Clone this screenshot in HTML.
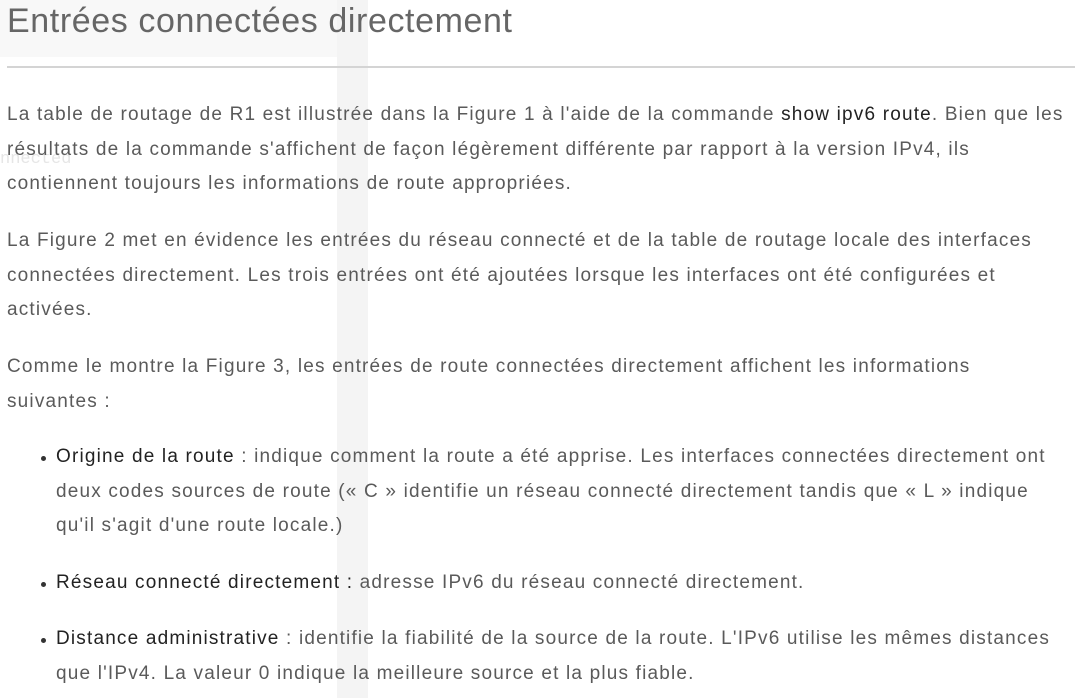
<!DOCTYPE html>
<html><head><meta charset="utf-8"><style>
html,body{margin:0;padding:0;background:#fff;width:1081px;height:698px;overflow:hidden;position:relative}
body{font-family:"Liberation Sans",sans-serif;color:#5a5a5a}
.g1{position:absolute;left:0;top:0;width:367px;height:57px;background:#f8f8f8}
.g2{position:absolute;left:337px;top:0;width:31px;height:698px;background:#f4f4f4}
.ghost{position:absolute;left:0;top:150px;font-family:"Liberation Mono",monospace;font-size:17px;color:#e6e6e6}
.c{position:absolute;left:7px;top:0;width:1074px}
h1{margin:0;position:absolute;top:2px;left:0;font-weight:300;font-size:34px;color:#666;white-space:nowrap;letter-spacing:0.6px}
hr{position:absolute;top:66px;left:0;width:1068px;margin:0;border:0;border-top:2px solid #d4d4d4}
p,li{font-size:19px;letter-spacing:1.18px;line-height:34.7px;white-space:nowrap;margin:0}
.t{position:absolute;left:0}
b{font-weight:normal;color:#222}
ul{margin:0;padding:0;list-style:none}
li{position:absolute;left:49px}
li:before{content:"";position:absolute;left:-15px;top:16px;width:5px;height:5px;border-radius:50%;background:#333}
</style></head><body>
<div class="g1"></div><div class="g2"></div>
<div class="ghost">nnected</div>
<div class="c">
<h1>Entrées connectées directement</h1>
<hr>
<p class="t" style="top:98px">La table de routage de R1 est illustrée dans la Figure 1 à l'aide de la commande <b>show ipv6 route</b>. Bien que les<br>résultats de la commande s'affichent de façon légèrement différente par rapport à la version IPv4, ils<br>contiennent toujours les informations de route appropriées.</p>
<p class="t" style="top:224px">La Figure 2 met en évidence les entrées du réseau connecté et de la table de routage locale des interfaces<br>connectées directement. Les trois entrées ont été ajoutées lorsque les interfaces ont été configurées et<br>activées.</p>
<p class="t" style="top:350px">Comme le montre la Figure 3, les entrées de route connectées directement affichent les informations<br>suivantes :</p>
<ul>
<li style="top:440px"><b>Origine de la route</b> : indique comment la route a été apprise. Les interfaces connectées directement ont<br>deux codes sources de route (« C » identifie un réseau connecté directement tandis que « L » indique<br>qu'il s'agit d'une route locale.)</li>
<li style="top:566px"><b>Réseau connecté directement :</b> adresse IPv6 du réseau connecté directement.</li>
<li style="top:622px"><b>Distance administrative</b> : identifie la fiabilité de la source de la route. L'IPv6 utilise les mêmes distances<br>que l'IPv4. La valeur 0 indique la meilleure source et la plus fiable.</li>
</ul>
</div>
</body></html>
